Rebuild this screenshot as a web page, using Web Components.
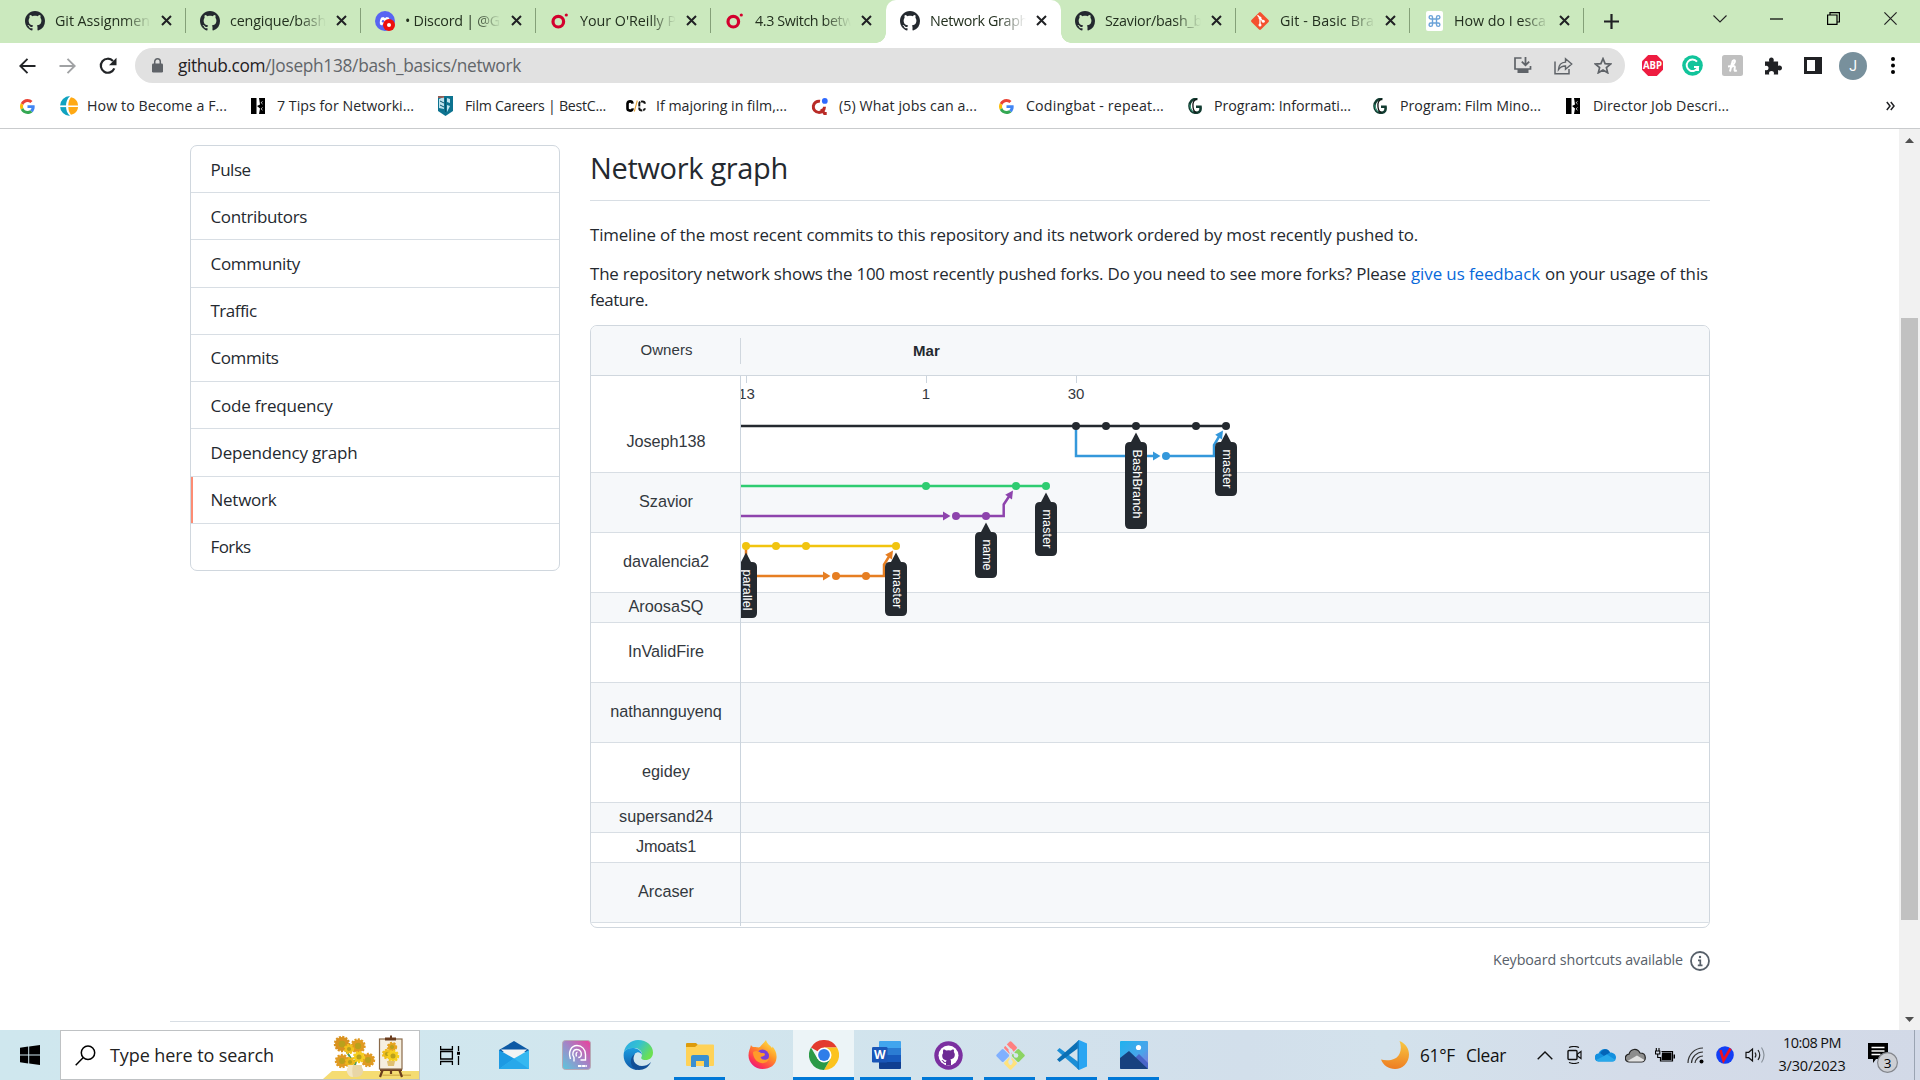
<!DOCTYPE html>
<html lang="en">
<head>
<meta charset="utf-8">
<title>Network Graph</title>
<style>
html,body{margin:0;width:1920px;height:1080px;overflow:hidden;background:#fff}
body{font-family:"Open Sans","Noto Sans",sans-serif;color:#24292f}
</style>
</head>
<body>
<desktop-screen></desktop-screen>
<script>
const OCTO='M8 0C3.58 0 0 3.58 0 8c0 3.54 2.29 6.53 5.47 7.59.4.07.55-.17.55-.38 0-.19-.01-.82-.01-1.49-2.01.37-2.53-.49-2.69-.94-.09-.23-.48-.94-.82-1.13-.28-.15-.68-.52-.01-.53.63-.01 1.08.58 1.23.82.72 1.21 1.87.87 2.33.66.07-.52.28-.87.51-1.07-1.78-.2-3.64-.89-3.64-3.95 0-.87.31-1.59.82-2.15-.08-.2-.36-1.02.08-2.12 0 0 .67-.21 2.2.82.64-.18 1.32-.27 2-.27.68 0 1.36.09 2 .27 1.53-1.04 2.2-.82 2.2-.82.44 1.1.16 1.92.08 2.12.51.56.82 1.27.82 2.15 0 3.07-1.87 3.75-3.65 3.95.29.25.54.73.54 1.48 0 1.07-.01 1.93-.01 2.2 0 .21.15.46.55.38A8.013 8.013 0 0016 8c0-4.42-3.58-8-8-8z';
const flower=(x,y,r,c='#e09a22')=>`<circle cx="${x}" cy="${y}" r="${r-1}" fill="${c}"/><circle cx="${x}" cy="${y}" r="${r-1}" fill="none" stroke="${c}" stroke-width="2.4" stroke-dasharray="2 1.3"/><circle cx="${x}" cy="${y}" r="${r*.42}" fill="#b9a11c"/>`;
const ICONS={
github:[20,20,'0 0 16 16',`<path fill="#24292f" d="${OCTO}"/>`],
discord:[20,20,'0 0 20 20',`<circle cx="10" cy="10" r="10" fill="#5865f2"/><path d="M5 13.400c-.6-2.400.2-5 1.300-6.800l2.300-.7.5.9h1.800l.5-.9 2.300.7c1.100 1.800 1.900 4.400 1.300 6.800l-2.100 1.100-.9-1.300H8l-.9 1.300z" fill="#fff"/><circle cx="8" cy="10.300" r="1.200" fill="#5865f2"/><circle cx="14" cy="14" r="6" fill="#ee0e0e"/><circle cx="14" cy="14" r="2" fill="#fff"/>`],
oreilly:[18,16,'0 0 18 16',`<circle cx="7.300" cy="8.700" r="5.300" fill="none" stroke="#d3002d" stroke-width="3.200"/><circle cx="15.300" cy="2" r="1.600" fill="#d3002d"/>`],
git:[20,20,'0 0 20 20',`<rect x="3.300" y="3.300" width="13.400" height="13.400" rx="1.300" transform="rotate(45 10 10)" fill="#f4502f"/><path d="M7.500 4.300 10 6.800v7.400M10 7.200l3.300 3.300" stroke="#fff" stroke-width="1.300" fill="none"/><circle cx="10" cy="7" r="1.500" fill="#fff"/><circle cx="10" cy="14" r="1.500" fill="#fff"/><circle cx="13.300" cy="10.300" r="1.500" fill="#fff"/>`],
cmd:[17,20,'0 0 17 20',`<rect width="17" height="20" rx="2" fill="#fff"/><path transform="translate(.5 2)" d="M6 6V4.300A1.700 1.700 0 1 0 4.300 6h7.400A1.700 1.700 0 1 0 10 4.300v7.400A1.700 1.700 0 1 0 11.700 10H4.300A1.700 1.700 0 1 0 6 11.700z" fill="none" stroke="#6ba3d8" stroke-width="1.400"/>`],
close:[11,11,'0 0 11 11',`<path d="M1 1l9 9M10 1l-9 9" stroke="#202124" stroke-width="2"/>`],
plus:[15,15,'0 0 15 15',`<path d="M7.500 0v15M0 7.500h15" stroke="#202124" stroke-width="2.200"/>`],
chev:[14,8,'0 0 14 8',`<path d="M.5.5 7 7 13.500.5" fill="none" stroke="#222" stroke-width="1.100"/>`],
min:[13,2,'0 0 13 2',`<path d="M0 1h13" stroke="#000" stroke-width="1.200"/>`],
max:[13,13,'0 0 13 13',`<path d="M.6 3h9.400v9.400H.6zM3 3V.6h9.400V10H10" fill="none" stroke="#000" stroke-width="1.200"/>`],
wclose:[13,13,'0 0 13 13',`<path d="M.4.4l12.200 12.200M12.600.4.4 12.600" stroke="#222" stroke-width="1.200"/>`],
back:[17,16,'0 0 17 16',`<path d="M16.500 8H1.500M8.500.8 1.300 8l7.200 7.200" fill="none" stroke="#222427" stroke-width="1.900"/>`],
fwd:[17,16,'0 0 17 16',`<path d="M.5 8h15M8.500.8 15.700 8l-7.200 7.200" fill="none" stroke="#a0a2a4" stroke-width="1.900"/>`],
reload:[18,18,'0 0 18 18',`<path d="M15.300 11.400A7 7 0 1 1 14 4" fill="none" stroke="#222427" stroke-width="2.200"/><path d="M17.500.8v7.500H10z" fill="#222427"/>`],
lock:[11,15,'0 0 11 15',`<path d="M2.700 6.500V3.600a2.800 2.800 0 0 1 5.600 0v2.900" fill="none" stroke="#5f6368" stroke-width="1.500"/><rect x="0" y="5.500" width="11" height="9" rx="1.200" fill="#5f6368"/>`],
install:[18,17,'0 0 18 17',`<path d="M7.500 1H1v11h15.500V9" fill="none" stroke="#5f6368" stroke-width="1.700"/><path d="M3.500 12h11v4h-11z" fill="#5f6368"/><path d="M11.500 0v7.500M7.800 4.600l3.700 3.600 3.700-3.600" fill="none" stroke="#5f6368" stroke-width="1.800"/>`],
share:[19,18,'0 0 19 18',`<path d="M1 4.500v12.300h14V12" fill="none" stroke="#5f6368" stroke-width="1.500"/><path d="M4.500 12.500c.3-5 3-7.200 7-7.400V1.800L17.700 7l-6.200 5.200V9c-3.200-.1-5.200.9-7 3.500z" fill="none" stroke="#5f6368" stroke-width="1.400"/>`],
star:[18,17,'0 0 18 17',`<path d="M9 1.700l2.100 5 5.400.4-4.100 3.500 1.300 5.200L9 13l-4.700 2.800 1.300-5.200L1.500 7.100l5.400-.4z" fill="none" stroke="#5f6368" stroke-width="1.700"/>`],
abp:[21,21,'0 0 21 21',`<path d="M6.200 0h8.600L21 6.200v8.600L14.800 21H6.200L0 14.800V6.200z" fill="#ee1c40"/><text x="10.500" y="14.200" text-anchor="middle" font-family="Open Sans" font-weight="700" font-size="10.500" textLength="19" lengthAdjust="spacingAndGlyphs" fill="#fff">ABP</text>`],
gram:[21,21,'0 0 21 21',`<circle cx="10.500" cy="10.500" r="10.300" fill="#11c49b"/><path d="M15 6.600A5.800 5.800 0 1 0 16 12h-4M16 12v4" fill="none" stroke="#fff" stroke-width="1.900"/>`],
honey:[21,21,'0 0 21 21',`<rect width="21" height="21" rx="2.500" fill="#c0c0c0"/><path d="M8 16.500 10 8c.6-3.500 3.600-3.600 2.800-1C12 9.500 9 11.300 6 11.500M8.600 13c1.500-2.300 4.400-2.700 4.200-.7-.3 2.300-1 4.500 2 3" fill="none" stroke="#fff" stroke-width="2"/>`],
puzzle:[18,18,'0 0 18 18',`<path d="M1 4.600h4.300C4.500 2.200 5.500.5 7.400.5s2.900 1.700 2.100 4.100h4.600v4.300c2.200-.8 3.900.2 3.900 2.100s-1.700 2.900-3.900 2.100v4.400h-4.400c.8-2.200-.3-3.600-2.200-3.600s-3 1.400-2.200 3.600H1v-4.600c2.200.8 3.500-.3 3.500-2s-1.300-2.800-3.500-2z" fill="#202124"/>`],
panel:[18,17,'0 0 18 17',`<path d="M0 0h18v17H0zM3 3v11h8V3z" fill="#202124" fill-rule="evenodd"/>`],
avatar:[28,28,'0 0 28 28',`<circle cx="14" cy="14" r="14" fill="#78909c"/><text x="14" y="19" text-anchor="middle" font-family="Roboto" font-size="14" fill="#fff">J</text>`],
dots:[4,17,'0 0 4 17',`<circle cx="2" cy="2" r="2"/><circle cx="2" cy="8.500" r="2"/><circle cx="2" cy="15" r="2"/>`],
google:[15,15,'0 0 48 48',`<path fill="#EA4335" d="M24 9.500c3.540 0 6.710 1.220 9.210 3.600l6.850-6.850C35.900 2.380 30.470 0 24 0 14.620 0 6.510 5.380 2.560 13.220l7.980 6.190C12.430 13.720 17.740 9.500 24 9.500z"/><path fill="#4285F4" d="M46.980 24.550c0-1.570-.15-3.090-.38-4.550H24v9.020h12.940c-.58 2.960-2.260 5.480-4.780 7.180l7.730 6c4.510-4.180 7.090-10.360 7.090-17.650z"/><path fill="#FBBC05" d="M10.530 28.590c-.48-1.450-.76-2.990-.76-4.590s.27-3.140.76-4.590l-7.980-6.190C.92 16.460 0 20.120 0 24c0 3.880.92 7.540 2.560 10.780l7.970-6.190z"/><path fill="#34A853" d="M24 48c6.480 0 11.930-2.130 15.890-5.810l-7.730-6c-2.150 1.450-4.920 2.300-8.160 2.300-6.260 0-11.570-4.220-13.470-9.910l-7.980 6.190C6.510 42.620 14.620 48 24 48z"/>`],
globe:[20,20,'0 0 20 20',`<path d="M12 0A10 10 0 0 0 12 20C9 17 8 14 8 10s1-7 4-10z" fill="#10a3c0"/><path d="M0 9.400h9v1.700H0z" fill="#fff"/><path d="M13 1.200c4.500 1 7 4 7 8.200h-9.700c.1-3.600.9-6 2.700-8.200zM10.300 11.100H20c-.2 4-2.700 6.800-7 7.700-1.800-2.200-2.600-4.400-2.700-7.700z" fill="#ffa914"/>`],
hbm:[14,16,'0 0 14 16',`<path d="M0 0h5.500v16H0zM8 0h6v16H8l1-5.500L6 8l3-1.500z" fill="#000"/><path d="M11.500 3.500c-1.500.5-1.500 1.700 0 2.500M11.500 9.500c-1.500.8-1.500 2 0 2.700" stroke="#fff" fill="none" stroke-width=".8"/>`],
film:[15,20,'0 0 15 20',`<path d="M0 0h15v15l-7.500 5L0 15z" fill="#0d7390"/><path d="M1 3l5-2v12l-5-1zM9 2l3 1v4L9 6zM9 9l3 1-3 6z" fill="#bfe3ee"/><path d="M0 1h6" stroke="#d85438" stroke-width="1.300"/><path d="M2 5l4 2M2 9l4 2M7.500 2v14" stroke="#08546c"/>`],
cc:[20,12,'0 0 20 12',`<path d="M6.500 3.600Q6.300 1.400 4.100 1.400T1.500 3.400v5.200q0 2 2.600 2T6.500 8.400" fill="none" stroke="#000" stroke-width="2.600"/><path d="M8.300 11.500 11.300.5" stroke="#e8a63b" stroke-width="1.100"/><path d="M18.800 3.800q0-2.300-2.600-2.300-2.900 0-2.900 2.300v4.400q0 2.300 2.900 2.300 2.600 0 2.600-2.300" fill="none" stroke="#111" stroke-width="2" stroke-dasharray="5 .8"/>`],
quora:[17,17,'0 0 17 17',`<path d="M9 3.300a5.600 5.600 0 1 0 4.500 5.500M10.300 11l3.200 4.500h2.200" fill="none" stroke="#b92b27" stroke-width="3"/><circle cx="13.800" cy="2.900" r="2.900" fill="#2e69ff"/>`],
cgreen:[15,16,'0 0 15 16',`<path d="M9.500 1C4 .5 1.500 4 1.500 8s2.500 6.800 6.500 6.800 5-2.500 4.500-6H8" fill="none" stroke="#123c31" stroke-width="2.600"/><path d="M9 1C5.500 2 4.500 5 5 9s1.500 4.500 3.500 5.500" fill="none" stroke="#111" stroke-width="1.300"/><path d="M2 6.500c0 4 1 6 3 7" stroke="#4ab393" fill="none"/>`],
more:[9,10,'0 0 9 10',`<path d="M.8 1 4 5 .8 9M4.800 1 8 5 4.800 9" fill="none" stroke="#202124" stroke-width="1.500"/>`],
info:[20,20,'0 0 20 20',`<circle cx="10" cy="10" r="9" fill="none" stroke="#57606a" stroke-width="1.800"/><path d="M8 9.300h2.300v5M7.800 14.300h4.700" stroke="#57606a" stroke-width="1.700" fill="none"/><circle cx="10" cy="6" r="1.200" fill="#57606a"/>`],
up:[9,5,'0 0 9 5',`<path d="M0 5 4.500 0 9 5z" fill="#505050"/>`],
down:[9,5,'0 0 9 5',`<path d="M0 0 4.500 5 9 0z" fill="#505050"/>`],
win:[20,20,'0 0 20 20',`<path d="M0 2.700 8.200 1.500v8H0zM9.200 1.400 20 0v9.500H9.200zM0 10.500h8.200v8L0 17.300zM9.200 10.500H20V20L9.200 18.600z" fill="#000"/>`],
search:[21,21,'0 0 21 21',`<circle cx="13" cy="7.700" r="6.700" fill="none" stroke="#000" stroke-width="1.500"/><path d="M8.300 12.500.7 20.200" stroke="#000" stroke-width="1.500"/>`],
sunflower:[96,48,'0 0 96 48',`<path d="M0 48 9 40H96v8z" fill="#f5dc72"/><path d="M22 18 32 34 38 15M18 32 31 30 44 25" stroke="#4e9a57" stroke-width="2" fill="none"/>${flower(19,13,8,'#d9921f')}${flower(35,15,7.500)}${flower(19,30,7)}${flower(45,29,7)}${flower(26,18,5,'#f2c11d')}${flower(36,26,6,'#f6cd1e')}${flower(27,31,5,'#eeb91c')}<path d="M25 34h14c-1 3 2 4 1 7-1 4-4 5-8 5s-7-1-8-5c-1-3 2-4 1-7z" fill="#e9d6a6"/><path d="M25 34h5c-1 4-1 8 0 12-3 0-5-2-6-5s2-4 1-7z" fill="#f3e6c3"/><path d="M58 43.500h30v1.500H60z" fill="#c59a3a" opacity=".6"/><path d="M60 38l-3 8M76 38l3 8M68 37v6M57 39h22" stroke="#6b3d1e" stroke-width="2.200" fill="none"/><rect x="56.500" y="8" width="22.500" height="30" fill="#f6efdf" stroke="#8a6a4a" stroke-width="1.200"/><path d="M62 8h11" stroke="#6b3d1e" stroke-width="3"/><path d="M68 4.500v4" stroke="#6b3d1e" stroke-width="2"/>${flower(69,16,5,'#e6a41f')}${flower(64,23,5,'#f0bd1c')}${flower(70,25,6,'#f6cf1e')}<path d="M64 30h8l-1 5h-6z" fill="#e0c070"/>`],
taskview:[20,19,'0 0 20 19',`<path d="M.6 0v3.500h11.800V0M.6 19v-3.500h11.800V19M.6 5.500h11.800v7.500H.6zM18.500 0v5M18.500 10v9" fill="none" stroke="#000" stroke-width="1.300"/><path d="M17 5.800h3v3h-3z"/>`],
mail:[30,28,'0 0 30 28',`<path d="M0 9 15 0 30 9v2H0z" fill="#0c59a4"/><path d="M2 8.500h26L15 20z" fill="#f4f4f4"/><path d="M0 9l15 8.500V28H0z" fill="#1d9ae3"/><path d="M30 9v19H0l15-10.500z" fill="#35b8f1"/><path d="M15 17.500 30 28H0z" fill="#28a8ea"/>`],
msi:[29,30,'0 0 29 30',`<defs><linearGradient id="m" x1="0" y1="1" x2="1" y2="0"><stop offset="0" stop-color="#59c8dc"/><stop offset=".5" stop-color="#a088c8"/><stop offset="1" stop-color="#ee3d9a"/></linearGradient></defs><rect x=".5" y=".5" width="28" height="29" rx="3" fill="url(#m)" stroke="#b7a9b5"/><path d="M8.500 19c-2.500-7 .5-13.500 6.500-13.500 5 0 8.500 4 8.500 9V20h-5M12 21.500v-4c-2.500-3-1-8 2.700-8 3.300 0 5 2.500 4.600 5.500-.3 1.700-1.300 2.500-3 2.500M14.500 16.500c-1-3 0-4.500 1-4" fill="none" stroke="#fff" stroke-width="1.400"/><path d="M16 26h9" stroke="#fff" stroke-width="2" stroke-dasharray="3.500 .6"/>`],
edge:[30,30,'0 0 30 30',`<defs><linearGradient id="e1" x1="0" y1="0" x2="1" y2=".5"><stop offset="0" stop-color="#2aa9e8"/><stop offset=".5" stop-color="#35c1d0"/><stop offset="1" stop-color="#6be052"/></linearGradient><linearGradient id="e2" x1="0" y1="0" x2="0" y2="1"><stop offset="0" stop-color="#1c9de0"/><stop offset="1" stop-color="#0f58a8"/></linearGradient></defs><path d="M1 12C2 5 8 0 15 0c9 0 15 6 15 12.500 0 5-3.500 7.500-7.500 7.500-3.500 0-5-1.500-4-3C20 14 18.500 9 12.500 8 7 7.500 3 9 1 12z" fill="url(#e1)"/><path d="M1 12c2-3 6-4.500 10-4 5 .7 8 4 8 7-1-2-3-3-5-2.500-5 1.500-6 10 2 15.500-1 1-2 2-3 1.900C5 28.500-1 21 1 12z" fill="url(#e2)"/><path d="M12 14c-4 5 0 12 7 12 3 0 6-1 9-4-2 5-7 8-12 8S7 25 8 20c.5-3 2-5 4-6z" fill="#124f96"/>`],
folder:[28,25,'0 0 28 25',`<path d="M0 1q0-1 1-1h9l3 3v3H0z" fill="#dd9b0c"/><path d="M0 4h9l3-2.500h15q1 0 1 1V22q0 1-1 1H1q-1 0-1-1z" fill="#ffd257"/><path d="M5 24V14q0-2 2-2h14q2 0 2 2v10h-5v-6h-8v6z" fill="#3a8fd0"/>`],
firefox:[29,30,'0 0 29 30',`<defs><linearGradient id="f" x1=".9" y1="0" x2=".2" y2="1"><stop offset="0" stop-color="#fff04a"/><stop offset=".45" stop-color="#ff9226"/><stop offset=".8" stop-color="#ff3750"/><stop offset="1" stop-color="#e31587"/></linearGradient></defs><path d="M3 5c1 2 2 2 4 2 2 0 3 1 5 0 1-2 4-4 6-7 1 4 4 5 6 8 1-1 0-2 0-2 3 3 5 7 4.500 12C28 25 22 29 14.500 29S.500 23 .500 15.500C.5 11 2 9 3 5z" fill="url(#f)"/><circle cx="14.500" cy="16" r="6.500" fill="#7a3fd8"/><path d="M5 12c3-2 6-1 8 1 2 0 4 0 4 1.500s-3 2-4.500 2.500c1 3 5 4 9 1-2 5-6 6-10 4.500S5 17 5 12z" fill="#ff9a2a"/>`],
chrome:[30,30,'0 0 30 30',`<path d="M15 15 2 7.500A15 15 0 0 1 28 7.500H15z" fill="#e33b2e"/><path d="M15 15 28 7.500A15 15 0 0 1 15 30l6.500-11.200z" fill="#fcc31e"/><path d="M15 15l6.500 3.800L15 30A15 15 0 0 1 2 7.500l6.500 11.300z" fill="#2a9a47"/><path d="M15 7.500h13a15 15 0 0 1-6.500 11.300z" fill="#fcc31e"/><circle cx="15" cy="15" r="7.500" fill="#fff"/><circle cx="15" cy="15" r="5.900" fill="#2f7de9"/>`],
word:[29,28,'0 0 29 28',`<path d="M7 1q0-1 1-1h20q1 0 1 1v6H7z" fill="#41a5ee"/><path d="M7 7h22v7H7z" fill="#2b7cd3"/><path d="M7 14h22v7H7z" fill="#185abd"/><path d="M7 21h22v6q0 1-1 1H8q-1 0-1-1z" fill="#103f91"/><rect y="6" width="15.500" height="15.500" rx="1.300" fill="#1a56b8"/><text x="7.700" y="18" text-anchor="middle" font-family="Open Sans" font-weight="700" font-size="12" fill="#fff">W</text>`],
ghd:[29,29,'0 0 29 29',`<circle cx="14.500" cy="14.500" r="14.200" fill="#7b2fa0"/><circle cx="14.500" cy="14.500" r="10" fill="#fff"/><path d="M9.300 8.600c.9-.3 2.200.4 3 1a9 9 0 0 1 4.400 0c.8-.6 2.100-1.300 3-1 .5 1.100.3 2 .1 2.500.7.700 1 1.500 1 2.500 0 3.600-2.200 4.500-4.500 4.800.5.500.7 1.100.7 1.900v4h-5v-2.500c-2.300.4-2.900-.7-3.300-1.500l-1.200-1.200c1-.3 1.700.2 2.200 1 .6 1 1.500 1 2.300.6.1-.7.400-1.100.7-1.300-2.300-.3-4.500-1.200-4.500-4.800 0-1 .3-1.800 1-2.500-.2-.5-.4-1.400.1-3.500z" fill="#6e2b94"/>`],
gitfw:[31,31,'0 0 31 31',`<g transform="rotate(45 15.500 15.500)"><rect x="5" y="5" width="10" height="10" rx="1.500" fill="#ff8080"/><rect x="16" y="5" width="10" height="10" rx="1.500" fill="#8cd463"/><rect x="5" y="16" width="10" height="10" rx="1.500" fill="#80b0ff"/><rect x="16" y="16" width="10" height="10" rx="1.500" fill="#ffe27d"/></g><path d="M10 4l5.500 6v15M15.500 10l6 6" stroke="#d6e5ee" stroke-width="2" fill="none"/><circle cx="15.500" cy="10.500" r="2" fill="#d6e5ee"/><circle cx="15.500" cy="22" r="2.300" fill="#d6e5ee"/><circle cx="21" cy="15.500" r="2.300" fill="#d6e5ee"/>`],
vsc:[30,30,'0 0 30 30',`<path d="M0 10.500 2.500 8 22 22.500V30z" fill="#1c8ed6"/><path d="M0 19.500 2.500 22 22 7.500V0z" fill="#0b6fb4"/><path d="M22 0l8 3.500v23L22 30z" fill="#2aa5f2"/><path d="M20.500 1.500 22 0v30l-1.500-1.500z" fill="#1482cc"/>`],
photos:[28,28,'0 0 28 28',`<defs><linearGradient id="p" x1="0" y1="0" x2="1" y2="1"><stop offset="0" stop-color="#1fb2ee"/><stop offset=".6" stop-color="#4ba4ea"/><stop offset="1" stop-color="#8b6fd8"/></linearGradient></defs><rect width="28" height="28" rx="1" fill="url(#p)"/><path d="M12 20l7-7 9 9v5q0 1-1 1H12z" fill="#4965c8"/><path d="M0 17 9 10l19 18H1q-1 0-1-1z" fill="#17417f"/><circle cx="18.500" cy="6.500" r="2.600" fill="#fff"/>`],
moon:[28,28,'0 0 28 28',`<defs><linearGradient id="mn" x1=".5" y1="0" x2=".4" y2="1"><stop offset="0" stop-color="#f8c640"/><stop offset="1" stop-color="#ee7c22"/></linearGradient></defs><path d="M18.500 0C25 2.500 28 8 28 13.500 28 22 21.500 28 14 28 7.500 28 2.500 24.500 0 18.500c2.500.8 6 1.200 10 .5C18.500 17.500 22 9 18.500 0z" fill="url(#mn)"/>`],
tup:[16,9,'0 0 16 9',`<path d="M.7 8.300 8 1l7.300 7.300" fill="none" stroke="#111" stroke-width="1.400"/>`],
cam:[16,18,'0 0 16 18',`<rect x="1" y="4.500" width="9" height="9" rx="1" fill="none" stroke="#111" stroke-width="1.400"/><path d="M10.500 8 14 5.500v7L10.500 10zM2 1.500Q7 -.5 12 1.500M2 16.500q5 2 10 0" fill="none" stroke="#111" stroke-width="1.200"/>`],
onedrive:[21,14,'0 0 21 14',`<path d="M4 13.500a4 4 0 0 1-.5-8C5 1 12-1.500 15 4.500c4 0 6 2.500 6 5s-2 4-4 4z" fill="#1490df"/><path d="M5 5C8 0 13 0 15 4.500L9 8z" fill="#0364b8"/><path d="M1 12 12 6.500l8.500 5.500c-1 1-2 1.500-3.500 1.500H4c-1.500 0-2.500-.7-3-1.500z" fill="#28a8ea"/>`],
cloud:[21,15,'0 0 21 15',`<path d="M4.500 14A3.900 3.900 0 0 1 4 6.200C5.500.800 12-.500 15 5c3.500 0 5.300 2.200 5.300 4.700S18.500 14 16.500 14z" fill="#8d8d8d" stroke="#222" stroke-width="1.200"/><path d="M2.500 13 12 7.500l7.500 4.500c-1 1-2 1.500-3 1.500H4.500z" fill="#e2e2e2"/>`],
battery:[20,14,'0 0 20 14',`<path d="M6.500 3.500h11v9.500h-12V9" fill="none" stroke="#000" stroke-width="1.200"/><path d="M7 4.500h9.500v7.500H6.500z"/><path d="M18.500 6.500H20v4h-1.500z"/><path d="M1.300 0v3M4 0v3M.5 3h4.300v3H.5zM2.700 6v3.500h3" fill="none" stroke="#000" stroke-width="1.100"/>`],
wifi:[17,17,'0 0 17 17',`<path d="M1 16A15 15 0 0 1 16 1M4.500 16A11.500 11.500 0 0 1 16 5M8 16a8 8 0 0 1 8-7" fill="none" stroke="#333" stroke-width="1.200"/><circle cx="14.500" cy="14.500" r="2"/>`],
vlogo:[18,18,'0 0 18 18',`<circle cx="9" cy="9" r="8.800" fill="#123ef5"/><path d="M4.500 4.200 7.500 14.500 14.500 2.500" fill="none" stroke="#ee1122" stroke-width="2.600"/>`],
speaker:[21,18,'0 0 21 18',`<path d="M1 6.300h2.700L7.500 3v12l-3.800-3.300H1z" fill="none" stroke="#111" stroke-width="1.200"/><path d="M10 6.500q1.800 2.500 0 5M13 4q3.500 5 0 10" fill="none" stroke="#222" stroke-width="1.200"/><path d="M16.500 1.500q5 7.500 0 15" fill="none" stroke="#8a929b" stroke-width="1.200"/>`],
notif:[31,31,'0 0 31 31',`<path d="M0 0h20v16H8l-3 4v-4H0z"/><path d="M3.500 4.500h13M3.500 8h13M3.500 11.500h9" stroke="#fff" stroke-width="1.300"/><circle cx="19.500" cy="19.500" r="9.900" fill="#cdcfd4" stroke="#83868c" stroke-width="1.200"/><text x="19.500" y="24.500" text-anchor="middle" font-family="Open Sans" font-size="13.500" fill="#000">3</text>`]
};
const el=(name,css,html)=>customElements.define(name,class extends HTMLElement{
  connectedCallback(){
    if(this.shadowRoot)return;
    const r=this.attachShadow({mode:'open'});
    r.innerHTML=`<style>:host{display:flex;box-sizing:border-box}${css}</style>`+(typeof html==='function'?html(this):html);
  }
});
const txt=(t,w,x='')=>`<fit-text w="${w}" ${x}>${t}</fit-text>`;

el('desktop-screen',':host{flex-direction:column;width:1920px;height:1080px}',
 '<tab-strip></tab-strip><address-bar></address-bar><bookmark-bar></bookmark-bar><page-view></page-view><task-bar></task-bar>');

/* browser chrome */
el('tab-strip',`:host{height:43px;background:#cbe9be;padding-left:11px;flex:none}
 .plus{width:54px;display:flex;justify-content:center;align-items:center}
 .ctl{display:flex;margin-left:auto;padding-right:1px;height:37px;align-items:center}.ctl ui-icon{width:57px}`,
 [['github','Git Assignmen',95],['github','cengique/bash',96],['discord','• Discord | @G',95],['oreilly',"Your O'Reilly P",96],['oreilly','4.3 Switch betw',98],['github','Network Graph',98,'active'],['github','Szavior/bash_b',97],['git','Git - Basic Bra',94,'w="174"'],['cmd','How do I esca',92,'w="174"']]
 .map(([i,t,w,a])=>`<browser-tab icon="${i}" ${a||''} style="width:${a&&a[0]=='w'?174:175}px"><fit-text w="${w}">${t}</fit-text></browser-tab>`).join('')+
 '<div class="plus"><ui-icon name="plus"></ui-icon></div><div class="ctl"><ui-icon name="chev"></ui-icon><ui-icon name="min"></ui-icon><ui-icon name="max"></ui-icon><ui-icon name="wclose"></ui-icon></div>');
el('browser-tab',`:host{height:43px;align-items:center;position:relative;font-size:14.300px;color:#23301f;padding:0 0 2px 12px}
 :host([active]){background:#fff;border-radius:10px 10px 0 0}
 :host([active])::before,:host([active])::after{content:"";position:absolute;bottom:0;width:10px;height:10px}
 :host([active])::before{left:-10px;background:radial-gradient(circle at 0 0,transparent 9.500px,#fff 10px)}
 :host([active])::after{right:-10px;background:radial-gradient(circle at 100% 0,transparent 9.500px,#fff 10px)}
 .i{width:24px}.t{width:96px;margin-left:8px;margin-right:1px;overflow:hidden;-webkit-mask-image:linear-gradient(90deg,#000 72%,transparent)}
 .c{width:28px}.s{width:1px;height:25px;margin-left:5px;background:#84a078}
 :host([active]) .s,.s.off{visibility:hidden}`,
 h=>{const next=h.nextElementSibling;const off=next&&next.hasAttribute('active')?'off':'';return `<ui-icon class="i" name="${h.getAttribute('icon')}"></ui-icon><div class="t"><slot></slot></div><ui-icon class="c" name="close"></ui-icon><span class="s ${off}"></span>`});
el('address-bar',`:host{height:45px;flex:none;align-items:center;background:#fff}
 .n{display:flex;padding-left:7.500px;width:127.500px}.n ui-icon{width:40px}
 .box{width:1490px;height:35px;border-radius:18px;background:#e1e1e1;display:flex;align-items:center;font-size:17.300px;color:#62666a}
 .lock{width:44px;margin-right:-1px}.u{padding-bottom:1px;white-space:nowrap;display:flex}b{font-weight:400;color:#1f2023}
 .r{margin-left:auto;display:flex;padding-right:2px}.r ui-icon{width:40px}
 .x{display:flex;padding-left:7.500px}.x ui-icon{width:40px}`,
 `<div class="n"><ui-icon name="back"></ui-icon><ui-icon name="fwd"></ui-icon><ui-icon name="reload"></ui-icon></div>
 <div class="box"><ui-icon class="lock" name="lock"></ui-icon><div class="u"><b>${txt('github.com',87)}</b>${txt('/Joseph138/bash_basics/network',256)}</div>
 <div class="r"><ui-icon name="install"></ui-icon><ui-icon name="share"></ui-icon><ui-icon name="star"></ui-icon></div></div>
 <div class="x">${['abp','gram','honey','puzzle','panel','avatar','dots'].map(n=>`<ui-icon name="${n}"></ui-icon>`).join('')}</div>`);
el('bookmark-bar',`:host{height:41px;flex:none;align-items:center;background:#fff;border-bottom:1px solid #c9cbcd;padding:0 25px 4px 19px;font-size:14.200px;color:#26282b}ui-icon.m{margin-left:auto}`,
 [['google',17,0,'',22],['globe',20,9,'How to Become a F...',140,23],['hbm',15,12,'7 Tips for Networki...',137,23],['film',16,12,'Film Careers | BestC...',141,20],['cc',20,10,'If majoring in film,...',131,24],['quora',17,11,'(5) What jobs can a...',138,21],['google',17,11,'Codingbat - repeat...',138,23],['cgreen',16,11,'Program: Informati...',137,21],['cgreen',16,12,'Program: Film Mino...',141,24],['hbm',16,12,'Director Job Descri...',136,0]]
 .map(b=>b[3]?`<book-mark icon="${b[0]}" iw="${b[1]}" gap="${b[2]}" style="margin-right:${b[5]}px">${txt(b[3],b[4])}</book-mark>`:`<ui-icon name="google" style="width:17px;margin-right:22px"></ui-icon>`).join('')+'<ui-icon class="m" name="more"></ui-icon>');
el('book-mark',`:host{align-items:center}div{padding-bottom:2px}`,h=>`<ui-icon name="${h.getAttribute('icon')}" style="width:${h.getAttribute('iw')}px;margin-right:${h.getAttribute('gap')}px"></ui-icon><div><slot></slot></div>`);

/* page */
el('page-view',`:host{height:901px;flex:none;background:#fff;justify-content:space-between;overflow:hidden}
 .wrap{display:flex;flex-direction:column;padding-left:170px;width:1560px}
 .cols{display:flex;padding:16px 20px 0;gap:30px;height:876px;box-sizing:border-box}
 .foot{height:1px;background:#d8dee4;margin-top:16px}`,
 `<div class="wrap"><div class="cols"><side-menu></side-menu><main-pane></main-pane></div><div class="foot"></div></div><scroll-bar></scroll-bar>`);
el('scroll-bar',`:host{width:21px;background:#f1f1f1;flex-direction:column;align-items:center;padding:9px 0 8px;height:901px}
 .t{width:17px;height:602px;background:#c1c1c1;margin-top:175px}.d{margin-top:auto}`,
 '<ui-icon name="up"></ui-icon><div class="t"></div><ui-icon class="d" name="down"></ui-icon>');
el('side-menu',`:host{flex-direction:column;width:370px;height:426px;border:1px solid #d0d7de;border-radius:7px;font-size:17px;flex:none;overflow:hidden}`,
 [['Pulse',40],['Contributors',96.500],['Community',89.500],['Traffic',46],['Commits',68],['Code frequency',122],['Dependency graph',147],['Network',66,'selected'],['Forks',40]].map(([t,w,s])=>`<menu-item ${s||''}>${txt(t,w)}</menu-item>`).join(''));
el('menu-item',`:host{flex:1;align-items:center;padding:0 0 0 19.500px;border-bottom:1px solid #d8dee4}
 :host(:last-child){border:0}:host([selected]){box-shadow:inset 2px 0 #fd8c73}`,'<slot></slot>');
el('main-pane',`:host{flex-direction:column;width:1120px;font-size:16.900px}
 h1{font-weight:400;font-size:29px;margin:0;height:55px;border-bottom:1px solid #d8dee4;line-height:45px}
 .p{display:flex;height:26px;align-items:center}.p1{margin-top:20px}.p2{margin-top:13px}a{color:#0969da}
 network-graph{margin-top:13px}.k{display:flex;justify-content:flex-end;align-items:center;gap:7px;margin-top:21px;font-size:14.300px;color:#57606a;height:24px}
 .k fit-text{height:23px}`,
 `<h1>${txt('Network graph',198)}</h1>
 <div class="p p1">${txt('Timeline of the most recent commits to this repository and its network ordered by most recently pushed to.',828)}</div>
 <div class="p p2">${txt('The repository network shows the 100 most recently pushed forks. Do you need to see more forks? Please',816)}<a style="margin:0 5px">${txt('give us feedback',129)}</a>${txt('on your usage of this',163)}</div>
 <div class="p">${txt('feature.',58)}</div><network-graph></network-graph>
 <div class="k">${txt('Keyboard shortcuts available',190)}<ui-icon name="info"></ui-icon></div>`);

/* commit graph; coordinates are relative to the graph's top-left corner */
const X=v=>v-590,Y=v=>v-325;
const line=(c,pts)=>`<polyline points="${pts.map(([a,b])=>X(a)+','+Y(b)).join(' ')}" fill="none" stroke="${c}" stroke-width="2.500"/>`;
const dots=(c,y,xs)=>xs.map(x=>`<circle cx="${X(x)}" cy="${Y(y)}" r="4" fill="${c}"/>`).join('');
const arrow=(c,x,y)=>`<path d="M${X(x)} ${Y(y)-4.500}l7.500 4.500-7.500 4.500z" fill="${c}"/>`;
const merge=(c,x,y)=>`<path d="M${X(x)} ${Y(y)}l-7.800 4.200 6.800 4.900z" fill="${c}"/>`;
const tag=(t,x,y,h,w)=>`<path d="M${X(x)} ${Y(y)-.5}l5 9.500h1q5 0 5 5v${h-10}q0 5-5 5h-12q-5 0-5-5v-${h-10}q0-5 5-5h1z" fill="#24292f"/><text transform="translate(${X(x)-3.300} ${Y(y)+16.500}) rotate(90)" textLength="${w}" font-size="12.500" fill="#fff">${t}</text>`;
el('network-graph',`:host{flex-direction:column;position:relative;width:1120px;height:603px;border:1px solid #d0d7de;border-radius:7px;overflow:hidden;font-family:"Liberation Sans",Arial,sans-serif}
 .h{height:50px;box-sizing:border-box;flex:none;background:#f6f8fa;border-bottom:1px solid #d0d7de;display:flex;align-items:center;font-size:15px;color:#33383e}
 .o{width:149px;height:26px;border-right:1px solid #d0d7de;display:flex;justify-content:center;align-items:center}
 .o fit-text{padding:0 0 2px 2px}.m{margin-left:172px;font-weight:700;color:#24292f}
 svg{position:absolute;left:-1px;top:-1px;font-family:"Liberation Sans",Arial,sans-serif}`,
 `<div class="h"><div class="o">${txt('Owners',52)}</div><div class="m">${txt('Mar',27)}</div></div>`+
 [['Joseph138',97,79],['Szavior',60,54],['davalencia2',60,86],['AroosaSQ',30,75],['InValidFire',60,76],['nathannguyenq',60,111.500],['egidey',60,48],['supersand24',30,94],['Jmoats1',30,60],['Arcaser',60,56]]
 .map(([n,h,w],i)=>`<owner-row style="height:${h}px;${i%2?'background:#f6f8fa;':''}${i?'':'padding-top:36px;'}">${txt(n,w)}</owner-row>`).join('')+`<owner-row style="height:5px;border:0"></owner-row>`+
 `<svg width="1120" height="603"><defs><clipPath id="c"><rect x="151" y="50" width="969" height="553"/></clipPath></defs>
 <path d="M150.500 51V601M156.500 51v7M336.500 51v7M486.500 51v7" stroke="#cbd4dd" fill="none"/>
 <g font-size="15" fill="#33383e" text-anchor="middle" clip-path="url(#c)"><text x="156.500" y="74">13</text><text x="336" y="74">1</text><text x="486" y="74">30</text></g><g clip-path="url(#c)">`+
 line('#24292f',[[730,426],[1226,426]])+line('#3498db',[[1076,426],[1076,456],[1155,456]])+line('#3498db',[[1166,456],[1214,456],[1214,445],[1220,435]])+dots('#24292f',426,[1076,1106,1136,1196,1226])+arrow('#3498db',1153,456)+merge('#3498db',1223,430.500)+dots('#3498db',456,[1166])+
 line('#2ecc71',[[730,486],[1046,486]])+dots('#2ecc71',486,[926,1016,1046])+line('#8e44ad',[[730,516],[946,516]])+line('#8e44ad',[[956,516],[1003.700,516],[1003.700,504.500],[1010,495]])+arrow('#8e44ad',943,516)+merge('#8e44ad',1013,490.500)+dots('#8e44ad',516,[956,986])+
 line('#e67e22',[[746,546],[746,576],[825,576]])+line('#f1c40f',[[746,546],[896,546]])+dots('#f1c40f',546,[746,776,806,896])+line('#e67e22',[[836,576],[884,576],[884,564.500],[890,555]])+arrow('#e67e22',823,576)+merge('#e67e22',893,550.500)+dots('#e67e22',576,[836,866])+
 tag('BashBranch',1136,433,87,69)+tag('master',1226,433,54,39)+tag('master',1046,493,54,39)+tag('name',986,523,46,31)+tag('parallel',746,553,56,41)+tag('master',896,553,54,39)+`</g></svg>`);
el('owner-row',`:host{flex:none;border-bottom:1px solid #d8dee4;align-items:center;font-size:16.250px;color:#33383e}div{width:150px;display:flex;justify-content:center;padding-bottom:2px}`,'<div><slot></slot></div>');

/* taskbar */
el('task-bar',`:host{height:50px;flex:none;background:linear-gradient(90deg,#cfe7ee 0,#d1e6ee 35%,#d2dfeb 65%,#d3e2ec 72%,#d4dce9 85%,#d2d9e7);color:#111}
 .s{width:60px}.q{width:360px;height:50px;box-sizing:border-box;background:#fff;border:1px solid #bfc2c4;display:flex;align-items:center;font-size:18px;color:#222;padding-left:14px}
 .q ui-icon:first-child{margin-right:14px}.fl{margin-left:auto}
 .tv{width:60px}.a{display:flex;margin-left:3px}.w{display:flex;align-items:center;margin-left:216px;font-size:17.300px;gap:11px;width:125px}
 .t{display:flex;margin-left:23px}.t ui-icon{width:30px}.t ui-icon:first-child{width:31px}.c{display:flex;flex-direction:column;align-items:center;justify-content:center;width:84px;font-size:14.500px}
 .c fit-text{height:23px;line-height:22px}.nt{margin-left:14px;padding-top:6px}.e{width:5px;margin-left:auto;border-left:1px solid #9aa4b2}`,
 `<ui-icon class="s" name="win"></ui-icon><div class="q"><ui-icon name="search"></ui-icon>${txt('Type here to search',164)}<ui-icon class="fl" name="sunflower"></ui-icon></div>
 <ui-icon class="tv" name="taskview"></ui-icon><div class="a">${[['mail'],['msi'],['edge'],['folder','open'],['firefox'],['chrome','open active'],['word','open'],['ghd','open'],['gitfw','open'],['vsc','open'],['photos','open']].map(([n,a])=>`<task-button icon="${n}" ${a||''}></task-button>`).join('')}</div>
 <div class="w"><ui-icon name="moon"></ui-icon>${txt('61°F',35)}${txt('Clear',40)}</div>
 <div class="t">${['tup','cam','onedrive','cloud','battery','wifi','vlogo','speaker'].map(n=>`<ui-icon name="${n}"></ui-icon>`).join('')}</div>
 <div class="c">${txt('10:08 PM',58)}${txt('3/30/2023',67)}</div><ui-icon class="nt" name="notif"></ui-icon><div class="e"></div>`);
el('task-button',`:host{width:62px;height:50px;flex-direction:column;align-items:center;justify-content:center;position:relative}
 :host([active]){background:#ecf4f7;width:61px;margin-right:1px}
 i{position:absolute;left:5px;right:6px;bottom:0;height:3px}:host([open]) i{background:#0078d7}:host([active]) i{left:0;right:0}`,
 h=>`<ui-icon name="${h.getAttribute('icon')}"></ui-icon><i></i>`);

el('ui-icon',`:host{align-items:center;justify-content:center;flex:none}svg{display:block;flex:none}`,
 h=>{const [w,hh,v,b]=ICONS[h.getAttribute('name')];return `<svg width="${w}" height="${hh}" viewBox="${v}">${b}</svg>`});

/* text run that is tracked to an exact width */
customElements.define('fit-text',class extends HTMLElement{
  connectedCallback(){
    const w=+this.getAttribute('w'),t=this.textContent,cs=getComputedStyle(this);
    const r=this.attachShadow({mode:'open'});
    const c=document.createElement('canvas').getContext('2d');
    c.font=`${cs.fontWeight} ${cs.fontSize} ${cs.fontFamily}`;
    const ls=(w-c.measureText(t).width)/t.length;
    r.innerHTML=`<style>:host{display:block;width:${w}px;flex:none;white-space:pre;letter-spacing:${ls.toFixed(3)}px}</style><slot></slot>`;
  }
});
</script>
</body>
</html>
